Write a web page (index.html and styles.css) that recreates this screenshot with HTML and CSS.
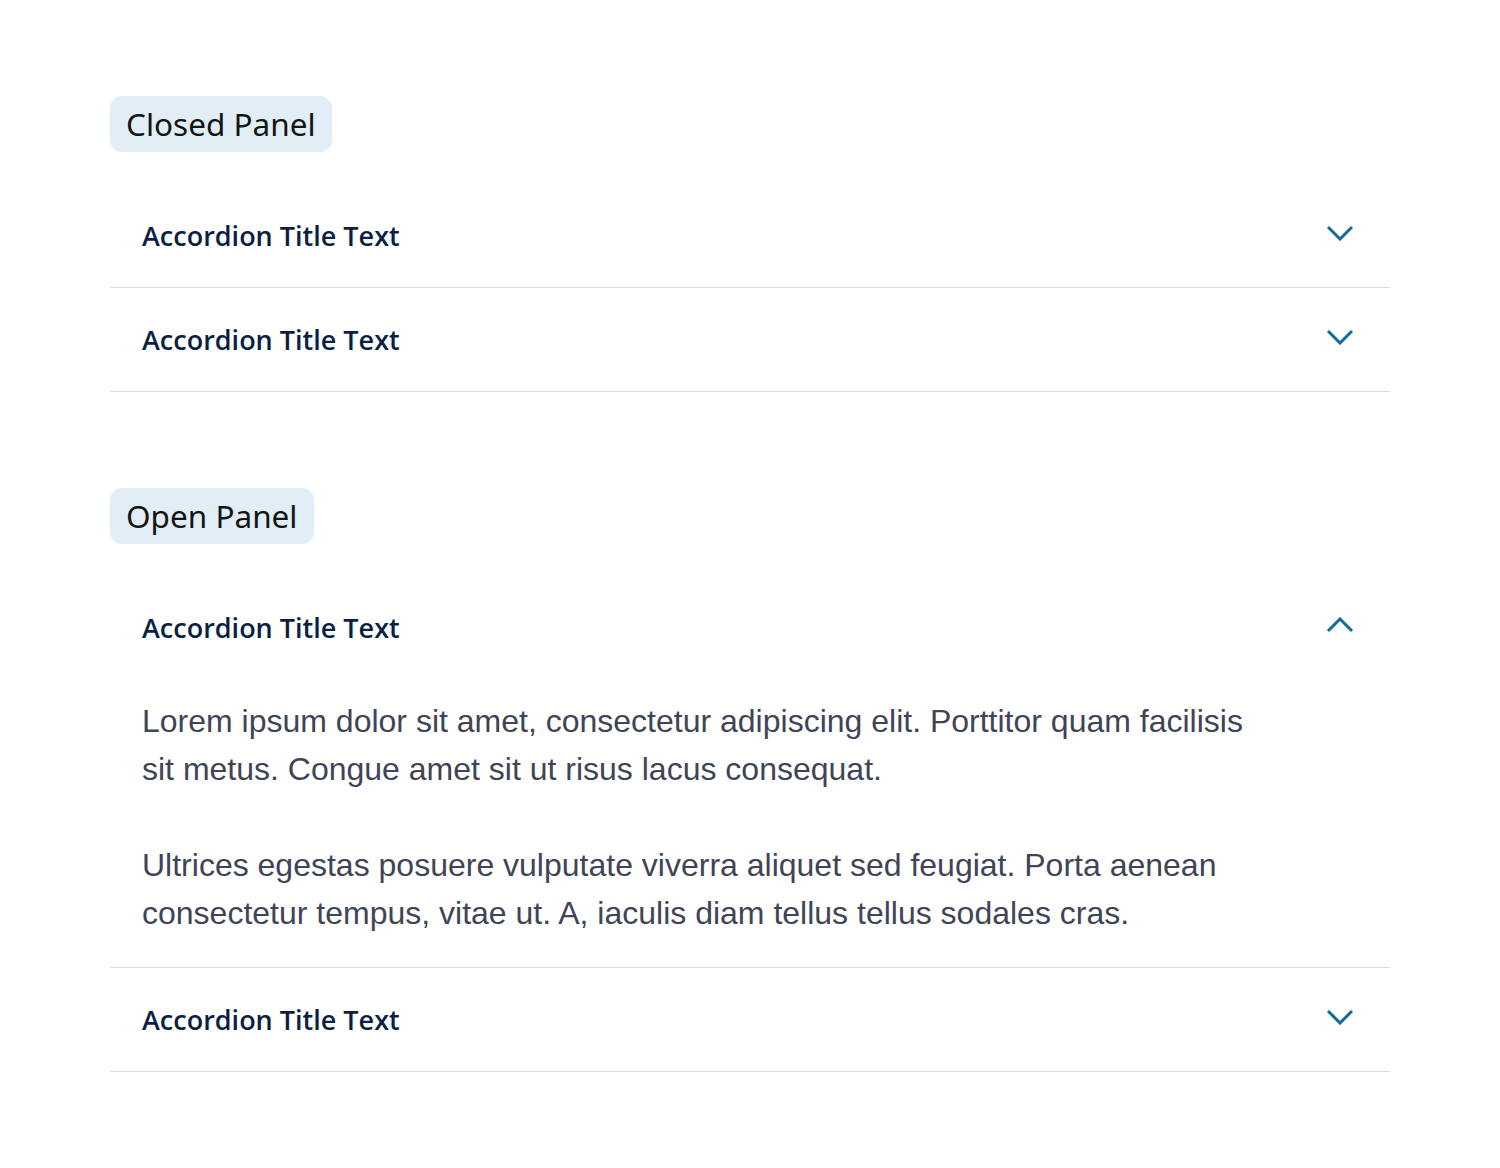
FILE: index.html
```html
<!DOCTYPE html>
<html lang="en">
<head>
    <meta charset="UTF-8">
    <meta name="viewport" content="width=device-width, initial-scale=1.0">
    <title>Accordion</title>
    <link rel="stylesheet" href="styles.css">
</head>
<body>
    <!-- Closed Panel -->
    <section class="demo">
        <span class="tag">Closed Panel</span>
        <div class="accordion">
            <div class="item">
                <button class="head">
                    <span class="title">Accordion Title Text</span>
                    <svg class="chevron" width="28" height="16" viewBox="0 0 28 16"><path d="M2 2 L14 14 L26 2" /></svg>
                </button>
            </div>
            <div class="item">
                <button class="head">
                    <span class="title">Accordion Title Text</span>
                    <svg class="chevron" width="28" height="16" viewBox="0 0 28 16"><path d="M2 2 L14 14 L26 2" /></svg>
                </button>
            </div>
        </div>
    </section>

    <!-- Open Panel -->
    <section class="demo">
        <span class="tag">Open Panel</span>
        <div class="accordion">
            <div class="item open">
                <button class="head">
                    <span class="title">Accordion Title Text</span>
                    <svg class="chevron" width="28" height="16" viewBox="0 0 28 16"><path d="M2 14 L14 2 L26 14" /></svg>
                </button>
                <div class="body">
                    <p>Lorem ipsum dolor sit amet, consectetur adipiscing elit. Porttitor quam facilisis sit metus. Congue amet sit ut risus lacus consequat.</p>
                    <p>Ultrices egestas posuere vulputate viverra aliquet sed feugiat. Porta aenean consectetur tempus, vitae ut. A, iaculis diam tellus tellus sodales cras.</p>
                </div>
            </div>
            <div class="item">
                <button class="head">
                    <span class="title">Accordion Title Text</span>
                    <svg class="chevron" width="28" height="16" viewBox="0 0 28 16"><path d="M2 2 L14 14 L26 2" /></svg>
                </button>
            </div>
        </div>
    </section>
</body>
</html>
```

FILE: styles.css
```css
body {
    margin: 0;
    padding: 96px 110px;
    background: #ffffff;
    font-family: 'Liberation Sans', Arial, sans-serif;
}
.demo {
    margin-bottom: 96px;
}
.demo:last-child { margin-bottom: 0; }
.tag {
    display: inline-block;
    background: #e2eef6;
    color: #141414;
    font-family: 'Noto Sans', sans-serif;
    font-size: 31.5px;
    line-height: 56px;
    padding: 0 16px;
    border-radius: 12px;
}
.accordion {
    margin-top: 32px;
}
.item {
    border-bottom: 1px solid #dadada;
}
.head {
    display: flex;
    align-items: center;
    justify-content: space-between;
    width: 100%;
    height: 103px;
    padding: 0 36px 0 32px;
    background: none;
    border: none;
    cursor: pointer;
    text-align: left;
}
.title {
    font-family: 'Open Sans', sans-serif;
    font-weight: 600;
    font-size: 27px;
    color: #0b1f44;
}
.chevron {
    margin-top: -6px;
}
.chevron path {
    fill: none;
    stroke: #136a9c;
    stroke-width: 3;
}
.body {
    padding: 18px 32px 30px;
    max-width: 1120px;
}
.body p {
    margin: 0 0 48px;
    font-size: 32px;
    line-height: 48px;
    color: #3f4456;
}
.body p:last-child { margin-bottom: 0; }
```
